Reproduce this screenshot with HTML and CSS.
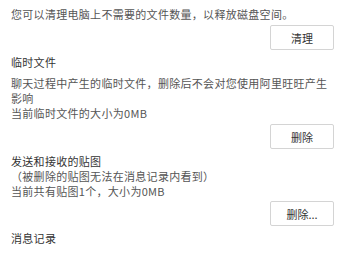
FILE: index.html
```html
<!DOCTYPE html>
<html lang="zh-CN">
<head>
    <meta charset="UTF-8">
    <title>清理</title>
    <link rel="stylesheet" href="styles.css">
</head>
<body>
    <div class="panel">
        <div class="section first">
            <p class="desc">您可以清理电脑上不需要的文件数量，以释放磁盘空间。</p>
            <div class="actions"><button class="btn">清理</button></div>
        </div>
        <div class="section">
            <h3 class="title">临时文件</h3>
            <p class="desc spaced">聊天过程中产生的临时文件，删除后不会对您使用阿里旺旺产生影响</p>
            <p class="desc">当前临时文件的大小为0MB</p>
            <div class="actions"><button class="btn">删除</button></div>
        </div>
        <div class="section">
            <h3 class="title">发送和接收的贴图</h3>
            <p class="desc">（被删除的贴图无法在消息记录内看到）</p>
            <p class="desc">当前共有贴图1个，大小为0MB</p>
            <div class="actions close"><button class="btn">删除...</button></div>
        </div>
        <div class="section">
            <h3 class="title">消息记录</h3>
        </div>
    </div>
</body>
</html>
```

FILE: styles.css
```css
body {
  margin: 0;
  background-color: #fff;
  font-family: "Noto Sans CJK SC", "Liberation Sans", sans-serif;
  font-size: 11px;
  letter-spacing: 0.3px;
  color: #555;
}

.panel {
  padding: 7px 5px 0 11px;
}

.section {
  margin-top: 5px;
}

.section.first {
  margin-top: 0;
}

.title {
  margin: 0;
  font-size: 11px;
  font-weight: normal;
  line-height: 15px;
  color: #333;
}

.desc {
  margin: 0;
  line-height: 15px;
  padding-right: 2px;
}

.desc.spaced {
  margin-top: 6px;
}

.actions {
  display: flex;
  justify-content: flex-end;
  margin-top: 3px;
}

.actions.close {
  margin-top: 2px;
}

.btn {
  width: 64px;
  height: 25px;
  padding: 0;
  background-color: #fff;
  border: 1px solid #d4d4d4;
  border-radius: 2px;
  font-family: inherit;
  font-size: 11px;
  color: #333;
  cursor: pointer;
}
```
